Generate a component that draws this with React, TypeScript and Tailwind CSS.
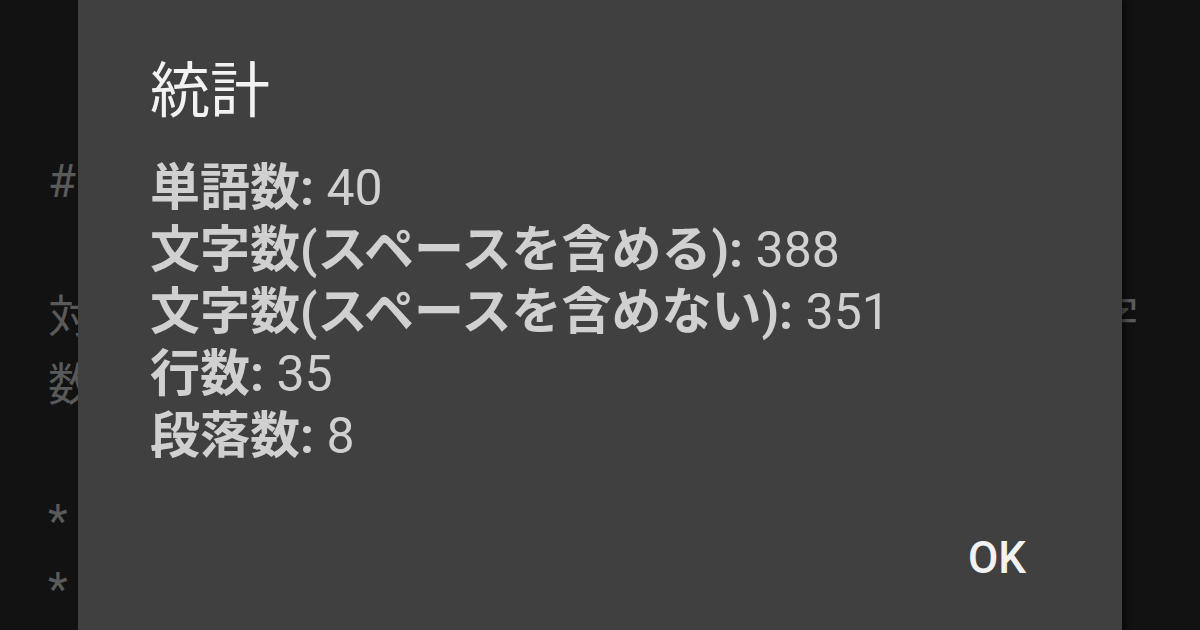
import React from "react";

const FONT = { fontFamily: 'Roboto, "Noto Sans CJK JP", sans-serif' };

export default function App() {
  const bgLines = [
    "## 文字数カウント",
    "\u00a0",
    "対象テキストに含まれる単語数や段落数、行数、文字",
    "数を表示します。",
    "\u00a0",
    "* 単語数",
    "* 文字数",
  ];
  const stats: [string, string][] = [
    ["単語数", "40"],
    ["文字数(スペースを含める)", "388"],
    ["文字数(スペースを含めない)", "351"],
    ["行数", "35"],
    ["段落数", "8"],
  ];
  return (
    <div className="relative w-[1200px] h-[630px] overflow-hidden bg-[#121212]" style={FONT}>
      <div className="flex flex-col pt-[148px] px-[48px] text-[45.5px] leading-[68px] text-[#5a5a5a] whitespace-nowrap">
        {bgLines.map((l, i) => (
          <div key={i}>{l}</div>
        ))}
      </div>
      <div className="absolute top-0 bottom-0 left-[78px] w-[1044px] bg-[#404040] shadow-[4px_0_6px_rgba(0,0,0,0.5)] flex flex-col pl-[72px] pr-[96px] pt-[62px]">
        <div className="text-[60px] leading-[60px] text-[#f2f2f2]">統計</div>
        <div className="flex flex-col mt-[35px] text-[50px] leading-[62px] text-[#d0d0d0]">
          {stats.map(([k, v]) => (
            <div key={k} className="whitespace-nowrap">
              <span className="font-bold">{k}:</span> {v}
            </div>
          ))}
        </div>
        <div className="flex justify-end mt-[69px]">
          <div className="text-[44px] leading-[44px] font-medium text-[#f2f2f2]">OK</div>
        </div>
      </div>
    </div>
  );
}
